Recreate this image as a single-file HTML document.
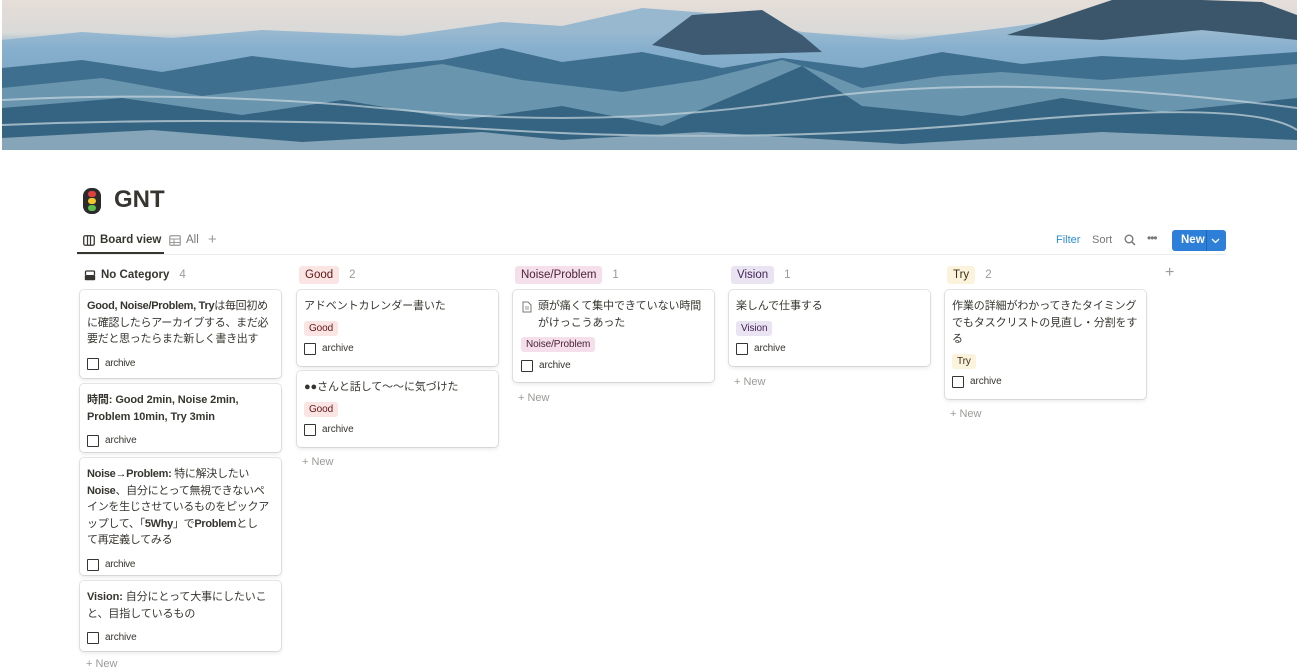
<!DOCTYPE html>
<html><head><meta charset="utf-8"><style>
*{box-sizing:border-box;margin:0;padding:0}
body{width:1299px;height:667px;overflow:hidden;background:#fff;font-family:"Liberation Sans","Noto Sans CJK JP",sans-serif;color:#37352f;position:relative}
.cover{position:absolute;left:2px;top:0;width:1295px;height:150px;overflow:hidden}
.a{position:absolute}
.card{position:absolute;width:201px;background:#fff;border-radius:4px;box-shadow:0 0 0 1px rgba(15,15,15,.1),0 2px 4px rgba(15,15,15,.1);padding:8px 7px;font-size:11px;line-height:16.5px;letter-spacing:-.1px}
.card b{font-weight:700}
.cb{display:flex;align-items:center;font-size:10px;color:#37352f;margin-top:8px}
.cb i{display:inline-block;width:12px;height:12px;border:1.5px solid #37352f;border-radius:1px;margin-right:6px}
.tag{display:inline-block;font-size:10px;padding:0 5px;border-radius:3px;line-height:15px;margin-top:6px}
.hd{position:absolute;top:266px;font-size:11.5px;display:flex;align-items:center;height:18px}
.hd .n{color:#9b9a97;margin-left:10px}
.hd .t{padding:1px 6px;border-radius:3px;line-height:16px}
.new{position:absolute;font-size:11px;color:#9b9a97}
</style></head><body>
<div class="cover">
<svg width="1295" height="150" viewBox="0 0 1295 150" preserveAspectRatio="none">
<defs>
<linearGradient id="sky" x1="0" y1="0" x2="0" y2="1"><stop offset="0" stop-color="#e6ded8"/><stop offset=".22" stop-color="#d9d9d8"/><stop offset=".32" stop-color="#8db3d0"/><stop offset=".6" stop-color="#45758f"/><stop offset="1" stop-color="#4f7f9a"/></linearGradient>
</defs>
<rect width="1295" height="150" fill="url(#sky)"/>
<path d="M0 40 L80 32 L170 38 L260 30 L400 36 L500 22 L560 26 L640 8 L720 14 L800 32 L900 40 L1000 28 L1100 15 L1295 20 L1295 150 L0 150Z" fill="#86afcd" opacity=".8"/>
<path d="M650 45 L690 15 L760 10 L800 35 L820 52 L700 55Z" fill="#3d5a72"/>
<path d="M1005 35 L1080 10 L1110 0 L1160 0 L1200 0 L1260 2 L1295 15 L1295 40 L1200 30 L1100 40Z" fill="#3b566b"/>
<path d="M0 68 L80 60 L160 72 L250 56 L350 68 L440 60 L500 48 L560 62 L640 52 L720 68 L780 58 L860 68 L940 52 L1020 64 L1100 56 L1180 60 L1295 52 L1295 150 L0 150Z" fill="#3f6f8e"/>
<path d="M0 88 L100 78 L200 96 L300 84 L440 64 L520 80 L620 92 L700 80 L780 60 L820 72 L860 88 L940 76 L1000 72 L1100 80 L1295 64 L1295 150 L0 150Z" fill="#7aa1b8" opacity=".75"/>
<path d="M0 108 L120 98 L240 115 L340 100 L460 120 L560 106 L660 126 L740 92 L800 66 L860 106 L960 116 L1060 98 L1160 112 L1295 98 L1295 150 L0 150Z" fill="#356482"/>
<path d="M0 100 Q200 90 400 110 T800 100 T1295 108" fill="none" stroke="#d8e4ea" stroke-width="2" opacity=".6"/>
<path d="M0 125 Q250 115 500 130 T1000 122 T1295 130" fill="none" stroke="#e6ecef" stroke-width="2" opacity=".6"/>
<path d="M0 138 L150 130 L300 142 L480 132 L560 140 L700 132 L900 144 L1100 132 L1295 140 L1295 150 L0 150Z" fill="#a9c1cf" opacity=".7"/>
</svg>
</div>

<div class="a" style="left:83px;top:188px;width:18px;height:26px;background:#2b2b2b;border-radius:8px"></div>
<div class="a" style="left:88px;top:191px;width:8px;height:6px;border-radius:4px;background:#e04040"></div>
<div class="a" style="left:88px;top:198px;width:8px;height:6px;border-radius:4px;background:#f3c82d"></div>
<div class="a" style="left:88px;top:205px;width:8px;height:6px;border-radius:4px;background:#5ec04a"></div>
<div class="a" style="left:114px;top:186px;font-size:24px;font-weight:700;color:#37352f">GNT</div>

<div class="a" style="left:83px;top:234px;font-size:11.5px;font-weight:700;display:flex;align-items:center"><svg width="12" height="11" style="margin-right:5px"><rect x=".75" y=".75" width="10.5" height="9.5" rx="1.5" fill="none" stroke="#37352f" stroke-width="1.3"/><path d="M4.5 1v9M7.5 1v9" stroke="#37352f" stroke-width="1.2"/></svg>Board view</div>
<div class="a" style="left:77px;top:252px;width:87px;height:2px;background:#37352f"></div>
<div class="a" style="left:169px;top:234px;font-size:11.5px;color:#787774;display:flex;align-items:center"><svg width="12" height="11" style="margin-right:5px"><rect x=".75" y=".75" width="10.5" height="9.5" rx="1" fill="none" stroke="#9b9a97" stroke-width="1.2"/><path d="M1 4h10M1 7.5h10M5 4v6" stroke="#9b9a97" stroke-width="1"/></svg>All</div>
<div class="a" style="left:208px;top:231px;font-size:15px;color:#9b9a97">+</div>
<div class="a" style="left:77px;top:254px;width:1149px;height:1px;background:#ececeb"></div>

<div class="a" style="left:1056px;top:234px;font-size:11px;color:#2e8ed6">Filter</div>
<div class="a" style="left:1092px;top:234px;font-size:11px;color:#787774">Sort</div>
<svg class="a" style="left:1124px;top:234px" width="12" height="12"><circle cx="5" cy="5" r="3.8" fill="none" stroke="#787774" stroke-width="1.4"/><path d="M8 8l3 3" stroke="#787774" stroke-width="1.5"/></svg>
<div class="a" style="left:1147px;top:231px;font-size:12px;color:#787774;letter-spacing:-1px">•••</div>
<div class="a" style="left:1172px;top:230px;width:54px;height:21px;background:#2e7fd8;border-radius:3px;color:#fff;font-size:11.5px;font-weight:700;line-height:21px;padding-left:9px">New</div>
<div class="a" style="left:1206px;top:230px;width:1px;height:21px;background:#1d65b5"></div>
<svg class="a" style="left:1211px;top:238px" width="9" height="6"><path d="M1 1l3.5 3.5L8 1" fill="none" stroke="#fff" stroke-width="1.3"/></svg>

<div class="hd" style="left:84px"><svg width="12" height="11" style="margin-right:5px"><path d="M1.5 5V2a1 1 0 011-1h7a1 1 0 011 1v3" fill="none" stroke="#37352f" stroke-width="1.3"/><rect x=".8" y="5" width="10.4" height="5.2" rx="1" fill="#37352f"/></svg><b>No Category</b><span class="n">4</span></div>
<div class="hd" style="left:299px"><span class="t" style="background:#fbe4e4;color:#5d1715">Good</span><span class="n">2</span></div>
<div class="hd" style="left:515px"><span class="t" style="background:#f4dfeb;color:#4c2337">Noise/Problem</span><span class="n">1</span></div>
<div class="hd" style="left:731px"><span class="t" style="background:#eae4f2;color:#412454">Vision</span><span class="n">1</span></div>
<div class="hd" style="left:947px"><span class="t" style="background:#fbf3db;color:#402c1b">Try</span><span class="n">2</span></div>
<div class="a" style="left:1165px;top:264px;font-size:16px;color:#9b9a97">+</div>

<div class="card" style="left:80px;top:290px;height:88px;letter-spacing:-.3px"><b>Good, Noise/Problem, Try</b>は毎回初め<br>に確認したらアーカイブする、まだ必<br>要だと思ったらまた新しく書き出す<div class="cb"><i></i>archive</div></div>
<div class="card" style="left:80px;top:384px;height:68px"><b>時間: Good 2min, Noise 2min, Problem 10min, Try 3min</b><div class="cb"><i></i>archive</div></div>
<div class="card" style="left:80px;top:458px;height:117px;letter-spacing:-.3px"><b>Noise→Problem:</b> 特に解決したい<br><b>Noise</b>、自分にとって無視できないペ<br>インを生じさせているものをピックア<br>ップして、「<b>5Why</b>」で<b>Problem</b>とし<br>て再定義してみる<div class="cb"><i></i>archive</div></div>
<div class="card" style="left:80px;top:581px;height:70px"><b>Vision:</b> 自分にとって大事にしたいこと、目指しているもの<div class="cb"><i></i>archive</div></div>
<div class="new" style="left:86px;top:658px">+ New</div>

<div class="card" style="left:297px;top:290px;height:76px">アドベントカレンダー書いた<br><span class="tag" style="background:#fbe4e4;color:#5d1715">Good</span><div class="cb" style="margin-top:5px"><i></i>archive</div></div>
<div class="card" style="left:297px;top:371px;height:76px">●●さんと話して〜〜に気づけた<br><span class="tag" style="background:#fbe4e4;color:#5d1715">Good</span><div class="cb" style="margin-top:5px"><i></i>archive</div></div>
<div class="new" style="left:302px;top:456px">+ New</div>

<div class="card" style="left:513px;top:290px;height:92px;padding-left:25px"><svg style="position:absolute;left:9px;top:11px" width="10" height="12"><path d="M1 1h5l3 3v7H1z" fill="none" stroke="#787774" stroke-width="1"/><path d="M3 6h4M3 8h4" stroke="#787774" stroke-width=".8"/></svg>頭が痛くて集中できていない時間がけっこうあった<br><span class="tag" style="background:#f4dfeb;color:#4c2337;margin-left:-17px">Noise/Problem</span><div class="cb" style="margin-top:5px;margin-left:-17px"><i></i>archive</div></div>
<div class="new" style="left:518px;top:392px">+ New</div>

<div class="card" style="left:729px;top:290px;height:76px">楽しんで仕事する<br><span class="tag" style="background:#eae4f2;color:#412454">Vision</span><div class="cb" style="margin-top:5px"><i></i>archive</div></div>
<div class="new" style="left:734px;top:376px">+ New</div>

<div class="card" style="left:945px;top:290px;height:109px">作業の詳細がわかってきたタイミングでもタスクリストの見直し・分割をする<br><span class="tag" style="background:#fbf3db;color:#402c1b">Try</span><div class="cb" style="margin-top:5px"><i></i>archive</div></div>
<div class="new" style="left:950px;top:408px">+ New</div>
</body></html>
